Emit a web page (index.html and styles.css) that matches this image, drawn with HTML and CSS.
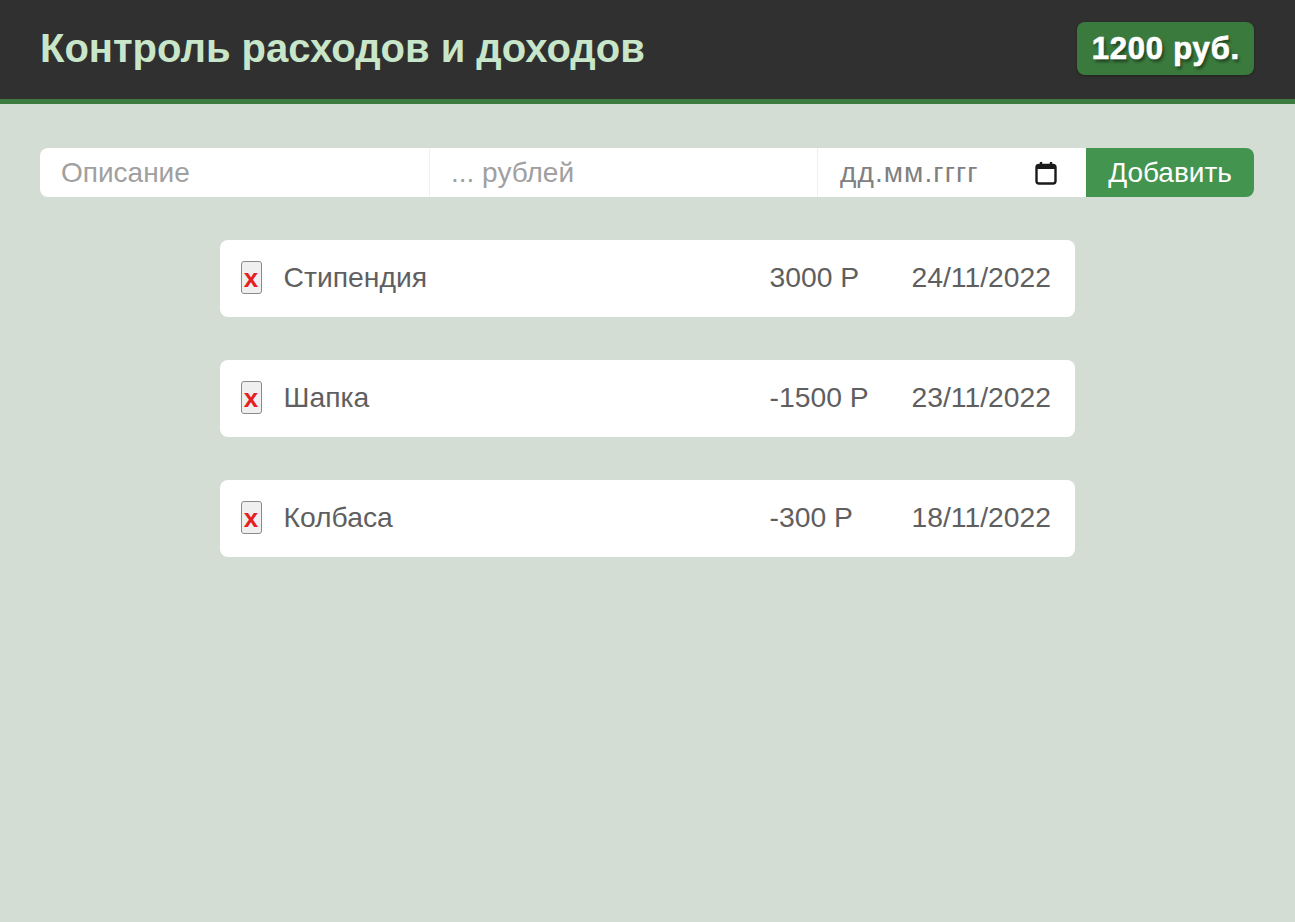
FILE: index.html
```html
<!DOCTYPE html>
<html lang="ru">
<head>
<meta charset="utf-8">
<title>Контроль расходов и доходов</title>
<link rel="stylesheet" href="styles.css">
</head>
<body>
<header class="header">
  <h1 class="title">Контроль расходов и доходов</h1>
  <div class="balance">1200 руб.</div>
</header>
<main class="main">
  <form class="form">
    <input class="field field-desc" type="text" placeholder="Описание">
    <input class="field field-amount" type="text" placeholder="... рублей">
    <div class="field field-date">
      <span class="date-ph">дд.мм.гггг</span>
      <svg class="cal" width="24" height="26" viewBox="0 0 24 26"><path d="M7 2v4M17 2v4" stroke="#1a1a1a" stroke-width="2.4" fill="none"/><rect x="2.5" y="5" width="19" height="18.5" rx="2.5" fill="none" stroke="#1a1a1a" stroke-width="2.4"/><rect x="2.5" y="5" width="19" height="4" fill="#1a1a1a"/></svg>
    </div>
    <button class="add" type="button">Добавить</button>
  </form>
  <ul class="list">
    <li class="item">
      <button class="del" type="button">x</button>
      <span class="name">Стипендия</span>
      <span class="amount">3000 Р</span>
      <span class="date">24/11/2022</span>
    </li>
    <li class="item">
      <button class="del" type="button">x</button>
      <span class="name">Шапка</span>
      <span class="amount">-1500 Р</span>
      <span class="date">23/11/2022</span>
    </li>
    <li class="item">
      <button class="del" type="button">x</button>
      <span class="name">Колбаса</span>
      <span class="amount">-300 Р</span>
      <span class="date">18/11/2022</span>
    </li>
  </ul>
</main>
</body>
</html>
```
FILE: styles.css
```css
* { box-sizing: border-box; }
html, body { margin: 0; padding: 0; }
body {
  background: #d3ddd3;
  font-family: "Liberation Sans", Arial, sans-serif;
  min-height: 922px;
}
.header {
  background: #303030;
  height: 104px;
  border-bottom: 5px solid #3d7a3f;
  display: flex;
  align-items: center;
  justify-content: space-between;
  padding: 0 41px 2px 40px;
}
.title {
  margin: 0;
  font-size: 40px;
  font-weight: bold;
  color: #c8e6c9;
}
.balance {
  background: #3a7a3d;
  color: #fff;
  font-weight: bold;
  font-size: 31px;
  letter-spacing: 0.8px;
  -webkit-text-stroke: 0.7px #fff;
  height: 53px;
  padding: 0 14px 0 15px;
  display: flex;
  align-items: center;
  border-radius: 8px;
  text-shadow: 2px 3px 3px rgba(0,0,0,0.45);
  box-shadow: 0 1px 3px rgba(0,0,0,0.3);
}
.main {
  padding: 44px 41px 0 40px;
}
.form {
  display: flex;
  height: 49px;
  margin: 0;
}
.field {
  height: 49px;
  border: 1px solid #f0f0f0;
  border-width: 0 1px 0 0;
  background: #fff;
  font-family: "Liberation Sans", Arial, sans-serif;
  font-size: 28px;
  color: #333;
  padding: 0 21px;
  outline: none;
}
.field::placeholder { color: #a0a0a0; }
.field-desc { width: 390px; border-radius: 8px 0 0 8px; }
.field-amount { width: 388px; }
.field-date {
  width: 268px;
  border: none;
  display: flex;
  align-items: center;
  justify-content: space-between;
  padding: 0 28px 0 22px;
}
.date-ph { color: #808080; letter-spacing: 1.1px; }
.cal { display: block; }
.add {
  flex: 1;
  height: 49px;
  border: none;
  background: #42944f;
  color: #fff;
  font-family: "Liberation Sans", Arial, sans-serif;
  font-size: 28px;
  border-radius: 0 8px 8px 0;
  padding: 0;
}
.list {
  list-style: none;
  margin: 43px auto 0;
  padding: 0;
  width: 855px;
  display: flex;
  flex-direction: column;
  gap: 43px;
}
.item {
  background: #fff;
  border-radius: 8px;
  height: 77px;
  display: flex;
  align-items: center;
  padding: 0 22px 2px 21px;
  font-size: 28.3px;
  color: #5f5f5f;
}
.del {
  width: 21px;
  height: 33px;
  padding: 0;
  background: #efefef;
  border: 1px solid #8a8a8a;
  border-radius: 3px;
  color: #e52020;
  font-family: "Liberation Sans", Arial, sans-serif;
  font-weight: bold;
  font-size: 26px;
  line-height: 28px;
  margin-right: 22px;
}
.name { flex: 1; }
.amount { width: 142px; }
.date { width: 141px; }
```
